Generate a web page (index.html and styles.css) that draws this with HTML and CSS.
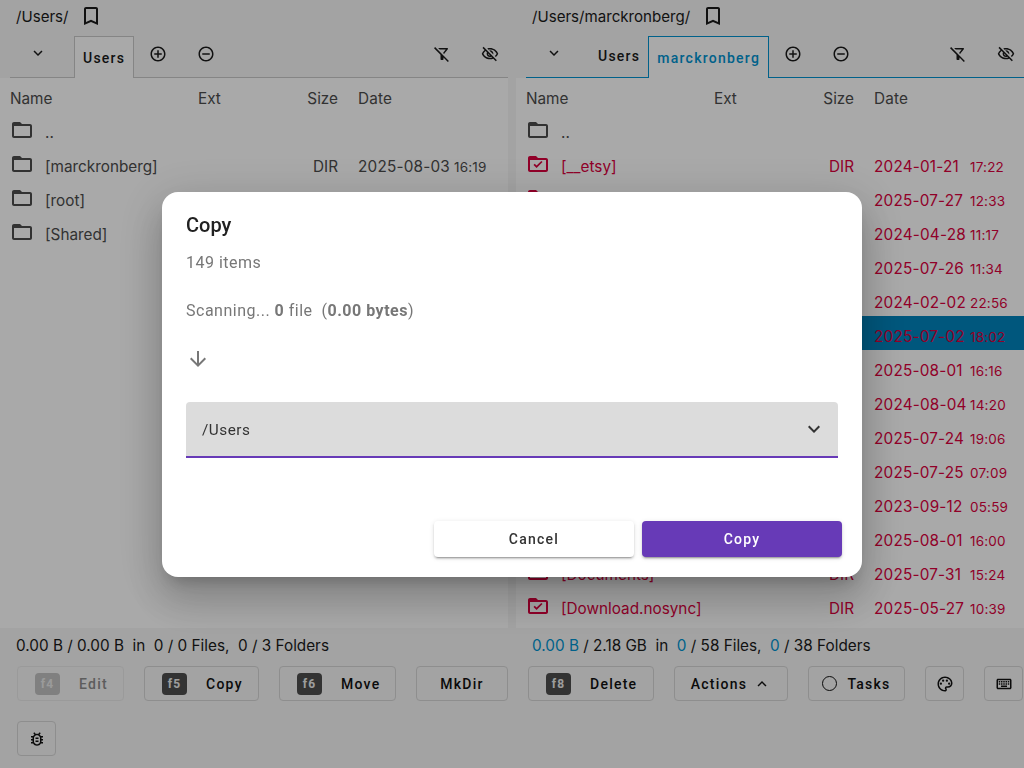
FILE: index.html
```html
<!DOCTYPE html>
<html lang="en">
<head>
    <meta charset="UTF-8">
    <meta name="viewport" content="width=device-width, initial-scale=1.0">
    <title>File Manager - Copy</title>
    <link rel="stylesheet" href="styles.css">
</head>
<body>
    <svg class="icon-defs" aria-hidden="true">
        <symbol id="i-folder" viewBox="0 0 24 24"><path d="M20 6h-8l-2-2H4c-1.1 0-1.99.9-1.99 2L2 18c0 1.1.9 2 2 2h16c1.1 0 2-.9 2-2V8c0-1.1-.9-2-2-2zm0 12H4V8h16v10z"/></symbol>
        <symbol id="i-marked" viewBox="0 0 24 24"><path d="M20 6h-8l-2-2H4c-1.1 0-1.99.9-1.99 2L2 18c0 1.1.9 2 2 2h16c1.1 0 2-.9 2-2V8c0-1.1-.9-2-2-2zm0 12H4V8h16v10z"/><path d="M10.6 16l-3.1-3.1 1.2-1.2 1.9 1.9 4.7-4.7 1.2 1.2z"/></symbol>
        <symbol id="i-bookmark" viewBox="0 0 24 24"><path d="M17 3H7c-1.1 0-2 .9-2 2v16l7-3 7 3V5c0-1.1-.9-2-2-2zm0 15l-5-2.18L7 18V5h10v13z"/></symbol>
        <symbol id="i-down" viewBox="0 0 24 24"><path d="M16.59 8.59L12 13.17 7.41 8.59 6 10l6 6 6-6z"/></symbol>
        <symbol id="i-up" viewBox="0 0 24 24"><path d="M12 8l-6 6 1.41 1.41L12 10.83l4.59 4.58L18 14z"/></symbol>
        <symbol id="i-add" viewBox="0 0 24 24"><path d="M13 7h-2v4H7v2h4v4h2v-4h4v-2h-4V7zm-1-5C6.48 2 2 6.48 2 12s4.48 10 10 10 10-4.48 10-10S17.52 2 12 2zm0 18c-4.41 0-8-3.59-8-8s3.59-8 8-8 8 3.59 8 8-3.59 8-8 8z"/></symbol>
        <symbol id="i-remove" viewBox="0 0 24 24"><path d="M7 11v2h10v-2H7zm5-9C6.48 2 2 6.48 2 12s4.48 10 10 10 10-4.48 10-10S17.52 2 12 2zm0 18c-4.41 0-8-3.59-8-8s3.59-8 8-8 8 3.59 8 8-3.59 8-8 8z"/></symbol>
        <symbol id="i-filter-off" viewBox="0 0 24 24"><path d="M16.95 6l-3.57 4.55 1.43 1.43c1.03-1.31 4.98-6.37 4.98-6.37C20.3 4.95 19.83 4 19 4H6.83l2 2h8.12zM2.81 2.81 1.39 4.22 10 13v6c0 .55.45 1 1 1h2c.55 0 1-.45 1-1v-2.17l5.78 5.78 1.41-1.41L2.81 2.81z"/></symbol>
        <symbol id="i-eye-off" viewBox="0 0 24 24"><path d="M12 6c3.79 0 7.17 2.13 8.82 5.5-.59 1.22-1.42 2.27-2.41 3.12l1.41 1.41c1.39-1.23 2.49-2.77 3.18-4.53C21.27 7.11 17 4 12 4c-1.27 0-2.49.2-3.64.57l1.65 1.65C10.66 6.09 11.32 6 12 6zm-1.07 1.14L13 9.21c.57.25 1.03.71 1.28 1.28l2.07 2.07c.08-.34.14-.7.14-1.07C16.5 9.01 14.48 7 12 7c-.37 0-.72.05-1.07.14zM2.01 3.87l2.68 2.68C3.06 7.83 1.77 9.53 1 11.5 2.73 15.89 7 19 12 19c1.52 0 2.98-.29 4.32-.82l3.42 3.42 1.41-1.41L3.42 2.45 2.01 3.87zm7.5 7.5l2.61 2.61c-.04.01-.08.02-.12.02-1.38 0-2.5-1.12-2.5-2.5 0-.05.01-.08.01-.13zm-3.4-3.4l1.75 1.75c-.23.55-.36 1.15-.36 1.78 0 2.48 2.02 4.5 4.5 4.5.63 0 1.23-.13 1.77-.36l.98.98c-.88.24-1.8.38-2.75.38-3.79 0-7.17-2.13-8.82-5.5.7-1.43 1.72-2.61 2.93-3.53z"/></symbol>
        <symbol id="i-palette" viewBox="0 0 24 24"><path d="M12 22C6.49 22 2 17.51 2 12S6.49 2 12 2s10 4.04 10 9c0 3.31-2.69 6-6 6h-1.77c-.28 0-.5.22-.5.5 0 .12.05.23.13.33.41.47.64 1.06.64 1.67 0 1.38-1.12 2.5-2.5 2.5zm0-18c-4.41 0-8 3.59-8 8s3.59 8 8 8c.28 0 .5-.22.5-.5 0-.16-.08-.28-.14-.35-.41-.46-.63-1.05-.63-1.65 0-1.38 1.12-2.5 2.5-2.5H16c2.21 0 4-1.79 4-4 0-3.86-3.59-7-8-7z"/><circle cx="6.5" cy="11.5" r="1.5"/><circle cx="9.5" cy="7.5" r="1.5"/><circle cx="14.5" cy="7.5" r="1.5"/><circle cx="17.5" cy="11.5" r="1.5"/></symbol>
        <symbol id="i-keyboard" viewBox="0 0 24 24"><path d="M20 7v10H4V7h16m0-2H4c-1.1 0-1.99.9-1.99 2L2 17c0 1.1.9 2 2 2h16c1.1 0 2-.9 2-2V7c0-1.1-.9-2-2-2zm-9 3h2v2h-2zm0 3h2v2h-2zM8 8h2v2H8zm0 3h2v2H8zm-3 0h2v2H5zm0-3h2v2H5zm3 6h8v2H8zm6-3h2v2h-2zm0-3h2v2h-2zm3 3h2v2h-2zm0-3h2v2h-2z"/></symbol>
        <symbol id="i-bug" viewBox="0 0 24 24"><path d="M20 8h-2.81c-.45-.78-1.07-1.45-1.82-1.96L17 4.41 15.59 3l-2.17 2.17C12.96 5.06 12.49 5 12 5s-.96.06-1.41.17L8.41 3 7 4.41l1.62 1.63C7.88 6.55 7.26 7.22 6.81 8H4v2h2.09c-.05.33-.09.66-.09 1v1H4v2h2v1c0 .34.04.67.09 1H4v2h2.81c1.04 1.79 2.97 3 5.19 3s4.15-1.21 5.19-3H20v-2h-2.09c.05-.33.09-.66.09-1v-1h2v-2h-2v-1c0-.34-.04-.67-.09-1H20V8zm-4 4v3c0 .22-.02.47-.06.7l-.1.65-.37.65c-.72 1.24-2.04 2-3.47 2s-2.75-.77-3.47-2l-.37-.64-.1-.65C8.02 15.47 8 15.22 8 15v-4c0-.23.02-.48.06-.7l.1-.65.37-.65c.3-.52.72-.97 1.21-1.31l.57-.39.74-.18c.31-.08.63-.12.95-.12.32 0 .63.04.95.12l.68.16.61.42c.5.34.91.78 1.21 1.31l.38.65.1.65c.04.22.06.47.06.69v1zm-6 2h4v2h-4zm0-4h4v2h-4z"/></symbol>
        <symbol id="i-arrow" viewBox="0 0 24 24"><path d="M20 12l-1.41-1.41L13 16.17V4h-2v12.17l-5.58-5.59L4 12l8 8 8-8z"/></symbol>
    </svg>

    <div class="app">
        <div class="panes">
            <!-- left pane -->
            <section class="pane">
                <div class="path-bar">
                    <span class="path">/Users/</span>
                    <svg class="icon-24"><use href="#i-bookmark"/></svg>
                </div>
                <div class="tab-bar">
                    <div class="tab-menu"><svg class="icon-18"><use href="#i-down"/></svg></div>
                    <div class="tab tab-active">Users</div>
                    <div class="tool"><svg class="icon-18"><use href="#i-add"/></svg></div>
                    <div class="tool"><svg class="icon-18"><use href="#i-remove"/></svg></div>
                    <div class="tools-right">
                        <div class="tool"><svg class="icon-18"><use href="#i-filter-off"/></svg></div>
                        <div class="tool"><svg class="icon-18"><use href="#i-eye-off"/></svg></div>
                    </div>
                </div>
                <div class="list">
                    <div class="row row-head">
                        <span>Name</span><span>Ext</span><span class="size">Size</span><span class="date">Date</span>
                    </div>
                    <div class="row">
                        <span class="name"><svg class="icon-24"><use href="#i-folder"/></svg>..</span>
                    </div>
                    <div class="row">
                        <span class="name"><svg class="icon-24"><use href="#i-folder"/></svg>[marckronberg]</span>
                        <span></span><span class="size">DIR</span>
                        <span class="date">2025-08-03<small>16:19</small></span>
                    </div>
                    <div class="row">
                        <span class="name"><svg class="icon-24"><use href="#i-folder"/></svg>[root]</span>
                    </div>
                    <div class="row">
                        <span class="name"><svg class="icon-24"><use href="#i-folder"/></svg>[Shared]</span>
                    </div>
                </div>
                <div class="status">0.00 B / 0.00 B&nbsp; in&nbsp; 0 / 0 Files,&nbsp; 0 / 3 Folders</div>
            </section>

            <!-- right pane -->
            <section class="pane pane-focus">
                <div class="path-bar">
                    <span class="path">/Users/marckronberg/</span>
                    <svg class="icon-24"><use href="#i-bookmark"/></svg>
                </div>
                <div class="tab-bar">
                    <div class="tab-menu"><svg class="icon-18"><use href="#i-down"/></svg></div>
                    <div class="tab">Users</div>
                    <div class="tab tab-active">marckronberg</div>
                    <div class="tool"><svg class="icon-18"><use href="#i-add"/></svg></div>
                    <div class="tool"><svg class="icon-18"><use href="#i-remove"/></svg></div>
                    <div class="tools-right">
                        <div class="tool"><svg class="icon-18"><use href="#i-filter-off"/></svg></div>
                        <div class="tool"><svg class="icon-18"><use href="#i-eye-off"/></svg></div>
                    </div>
                </div>
                <div class="list">
                    <div class="row row-head">
                        <span>Name</span><span>Ext</span><span class="size">Size</span><span class="date">Date</span>
                    </div>
                    <div class="row">
                        <span class="name"><svg class="icon-24"><use href="#i-folder"/></svg>..</span>
                    </div>
                    <div class="row row-marked">
                        <span class="name"><svg class="icon-24"><use href="#i-marked"/></svg>[__etsy]</span>
                        <span></span><span class="size">DIR</span>
                        <span class="date">2024-01-21<small>17:22</small></span>
                    </div>
                    <div class="row row-marked">
                        <span class="name"><svg class="icon-24"><use href="#i-marked"/></svg></span>
                        <span></span><span class="size">DIR</span>
                        <span class="date">2025-07-27<small>12:33</small></span>
                    </div>
                    <div class="row row-marked">
                        <span class="name"><svg class="icon-24"><use href="#i-marked"/></svg></span>
                        <span></span><span class="size">DIR</span>
                        <span class="date">2024-04-28<small>11:17</small></span>
                    </div>
                    <div class="row row-marked">
                        <span class="name"><svg class="icon-24"><use href="#i-marked"/></svg></span>
                        <span></span><span class="size">DIR</span>
                        <span class="date">2025-07-26<small>11:34</small></span>
                    </div>
                    <div class="row row-marked">
                        <span class="name"><svg class="icon-24"><use href="#i-marked"/></svg></span>
                        <span></span><span class="size">DIR</span>
                        <span class="date">2024-02-02<small>22:56</small></span>
                    </div>
                    <div class="row row-marked row-cursor">
                        <span class="name"><svg class="icon-24"><use href="#i-marked"/></svg></span>
                        <span></span><span class="size">DIR</span>
                        <span class="date">2025-07-02<small>18:02</small></span>
                    </div>
                    <div class="row row-marked">
                        <span class="name"><svg class="icon-24"><use href="#i-marked"/></svg></span>
                        <span></span><span class="size">DIR</span>
                        <span class="date">2025-08-01<small>16:16</small></span>
                    </div>
                    <div class="row row-marked">
                        <span class="name"><svg class="icon-24"><use href="#i-marked"/></svg></span>
                        <span></span><span class="size">DIR</span>
                        <span class="date">2024-08-04<small>14:20</small></span>
                    </div>
                    <div class="row row-marked">
                        <span class="name"><svg class="icon-24"><use href="#i-marked"/></svg></span>
                        <span></span><span class="size">DIR</span>
                        <span class="date">2025-07-24<small>19:06</small></span>
                    </div>
                    <div class="row row-marked">
                        <span class="name"><svg class="icon-24"><use href="#i-marked"/></svg></span>
                        <span></span><span class="size">DIR</span>
                        <span class="date">2025-07-25<small>07:09</small></span>
                    </div>
                    <div class="row row-marked">
                        <span class="name"><svg class="icon-24"><use href="#i-marked"/></svg></span>
                        <span></span><span class="size">DIR</span>
                        <span class="date">2023-09-12<small>05:59</small></span>
                    </div>
                    <div class="row row-marked">
                        <span class="name"><svg class="icon-24"><use href="#i-marked"/></svg></span>
                        <span></span><span class="size">DIR</span>
                        <span class="date">2025-08-01<small>16:00</small></span>
                    </div>
                    <div class="row row-marked">
                        <span class="name"><svg class="icon-24"><use href="#i-marked"/></svg>[Documents]</span>
                        <span></span><span class="size">DIR</span>
                        <span class="date">2025-07-31<small>15:24</small></span>
                    </div>
                    <div class="row row-marked">
                        <span class="name"><svg class="icon-24"><use href="#i-marked"/></svg>[Download.nosync]</span>
                        <span></span><span class="size">DIR</span>
                        <span class="date">2025-05-27<small>10:39</small></span>
                    </div>
                </div>
                <div class="status"><b>0.00 B</b> / 2.18 GB&nbsp; in&nbsp; <b>0</b> / 58 Files,&nbsp; <b>0</b> / 38 Folders</div>
            </section>
        </div>

        <div class="toolbar">
            <button class="btn btn-key btn-disabled btn-edit"><kbd>f4</kbd>Edit</button>
            <button class="btn btn-key btn-copy"><kbd>f5</kbd>Copy</button>
            <button class="btn btn-key btn-move"><kbd>f6</kbd>Move</button>
            <button class="btn btn-mkdir">MkDir</button>
            <button class="btn btn-key btn-delete"><kbd>f8</kbd>Delete</button>
            <button class="btn btn-actions">Actions<svg class="icon-18"><use href="#i-up"/></svg></button>
            <button class="btn btn-tasks"><span class="ring"></span>Tasks</button>
            <button class="btn btn-icon"><svg class="icon-18"><use href="#i-palette"/></svg></button>
            <button class="btn btn-icon"><svg class="icon-18"><use href="#i-keyboard"/></svg></button>
            <button class="btn btn-icon"><svg class="icon-18"><use href="#i-bug"/></svg></button>
        </div>
    </div>

    <div class="scrim">
        <div class="dialog">
            <h2 class="dialog-title">Copy</h2>
            <p class="dialog-text items">149 items</p>
            <p class="dialog-text scan">Scanning... <b>0</b> file&nbsp; (<b>0.00 bytes</b>)</p>
            <svg class="arrow"><use href="#i-arrow"/></svg>
            <div class="select">
                <span class="select-value">/Users</span>
                <svg class="icon-24"><use href="#i-down"/></svg>
            </div>
            <div class="dialog-actions">
                <button class="action action-cancel">Cancel</button>
                <button class="action action-copy">Copy</button>
            </div>
        </div>
    </div>
</body>
</html>
```

FILE: styles.css
```css
* {
    margin: 0;
    padding: 0;
    box-sizing: border-box;
}

html, body {
    height: 100%;
}

body {
    background: #f0f0f0;
    color: #1a1a1a;
    font-family: Inter, "Liberation Sans", sans-serif;
    font-size: 15.3px;
    overflow: hidden;
}

.icon-defs {
    display: none;
}

svg {
    fill: currentColor;
    flex: none;
}

.icon-24 {
    width: 24px;
    height: 24px;
}

.icon-18 {
    width: 18px;
    height: 18px;
}

.panes {
    display: grid;
    grid-template-columns: 508px 508px;
    gap: 8px;
}

.path-bar {
    display: flex;
    align-items: center;
    gap: 10.5px;
    height: 36px;
    padding: 0 0 4px 16px;
}

.path {
    font-size: 15.1px;
}

.tab-bar {
    display: flex;
    height: 42px;
    margin-left: 10px;
    border-bottom: 1px solid #c4c4c4;
}

.pane-focus .tab-bar {
    border-bottom-color: #0090cc;
}

.tab-menu {
    display: flex;
    justify-content: center;
    padding-top: 8px;
    width: 56px;
    margin-right: 8px;
}

.tab {
    height: 42px;
    padding: 12px 8px 0 8px;
    font-family: Roboto, sans-serif;
    font-size: 14px;
    font-weight: 500;
    letter-spacing: 1.25px;
}

.tab-active {
    padding: 13px 8px 0 8px;
    background: #f9f9f9;
    border: 1px solid #c4c4c4;
    border-bottom: none;
}

.pane-focus .tab-active {
    border-color: #0090cc;
    color: #0090cc;
}

.tool {
    display: flex;
    justify-content: center;
    padding-top: 9px;
    width: 48px;
}

.tools-right {
    display: flex;
    margin-left: auto;
    margin-right: -6px;
}

.list {
    height: 550px;
    background: #f9f9f9;
    color: #4a4a4a;
}

.row {
    display: grid;
    grid-template-columns: 188px 90px 50px 1fr;
    align-items: center;
    height: 34px;
    padding: 6px 0 0 10px;
}

.name {
    display: flex;
    align-items: center;
    gap: 11px;
    white-space: nowrap;
}

.name svg {
    margin-top: -4px;
}

.size {
    text-align: right;
}

.date {
    display: grid;
    grid-template-columns: 96px auto;
    align-items: baseline;
    padding-left: 20px;
    letter-spacing: 0.2px;
    white-space: nowrap;
}

.date small {
    font-size: 13.5px;
}

.row-marked {
    color: #d6003c;
}

.row-cursor {
    background: #0080b8;
}

.status {
    display: flex;
    align-items: center;
    height: 35px;
    padding-left: 16px;
    white-space: pre;
}

.status b {
    font-weight: 400;
    color: #0090cc;
}

.toolbar {
    display: flex;
    flex-wrap: wrap;
    gap: 20px;
    padding: 3px 0 0 17px;
}

.btn {
    display: flex;
    align-items: center;
    justify-content: center;
    height: 35px;
    background: none;
    border: 1px solid #d2d2d2;
    border-radius: 4px;
    color: #111;
    font-family: Roboto, sans-serif;
    font-size: 14px;
    font-weight: 500;
    letter-spacing: 1.25px;
}

.btn-key {
    justify-content: flex-start;
    padding-left: 17px;
}

.btn kbd {
    display: flex;
    align-items: center;
    justify-content: center;
    width: 25px;
    height: 22px;
    margin-right: 19px;
    background: #4c4c4c;
    border-radius: 4px;
    color: #e8e8e8;
    font-family: Roboto, sans-serif;
    font-size: 12px;
    font-weight: 700;
}

.btn-disabled {
    color: #8a8a8a;
    border-color: #e4e4e4;
}

.btn-disabled kbd {
    background: #bdbdbd;
    color: #e4e4e4;
}

.btn-edit { width: 107px; }
.btn-copy { width: 115px; }
.btn-move { width: 117px; }
.btn-mkdir { width: 92px; }
.btn-delete { width: 126px; }
.btn-actions { width: 114px; gap: 6px; }
.btn-tasks { width: 97px; gap: 10px; }
.btn-icon { width: 39px; }

.ring {
    width: 15px;
    height: 15px;
    border: 1.5px solid #111;
    border-radius: 50%;
}

.scrim {
    position: fixed;
    inset: 0;
    display: flex;
    align-items: flex-start;
    justify-content: center;
    padding-top: 192px;
    background: rgba(0, 0, 0, 0.32);
}

.dialog {
    width: 700px;
    height: 385px;
    padding: 21px 20px 20px 24px;
    background: #fff;
    border-radius: 16px;
    box-shadow: 0 11px 15px -7px rgba(0, 0, 0, 0.2), 0 24px 38px 3px rgba(0, 0, 0, 0.14), 0 9px 46px 8px rgba(0, 0, 0, 0.12);
    font-family: Roboto, sans-serif;
}

.dialog-title {
    font-size: 20px;
    font-weight: 500;
    line-height: 24px;
    color: #212121;
}

.dialog-text {
    font-size: 16px;
    letter-spacing: 0.5px;
    line-height: 20px;
    color: #777;
}

.items {
    margin-top: 16px;
}

.scan {
    margin-top: 28px;
}

.arrow {
    display: block;
    width: 24px;
    height: 24px;
    margin-top: 26px;
    color: #777;
}

.select {
    display: flex;
    align-items: center;
    justify-content: space-between;
    width: 652px;
    height: 56px;
    margin-top: 31px;
    padding: 0 12px 0 16px;
    background: #dcdcdc;
    border-bottom: 2px solid #673ab7;
    border-radius: 4px 4px 0 0;
    color: #333;
    letter-spacing: 0.5px;
}

.select-value {
    margin-top: 2px;
}

.dialog-actions {
    display: flex;
    justify-content: flex-end;
    gap: 8px;
    margin-top: 63px;
}

.action {
    width: 200px;
    height: 36px;
    border: none;
    border-radius: 4px;
    font-family: Roboto, sans-serif;
    font-size: 14px;
    font-weight: 500;
    letter-spacing: 1.25px;
    box-shadow: 0 3px 1px -2px rgba(0, 0, 0, 0.2), 0 2px 2px rgba(0, 0, 0, 0.14), 0 1px 5px rgba(0, 0, 0, 0.12);
}

.action-cancel {
    background: #fff;
    color: #333;
}

.action-copy {
    background: #673ab7;
    color: #fff;
}
```
